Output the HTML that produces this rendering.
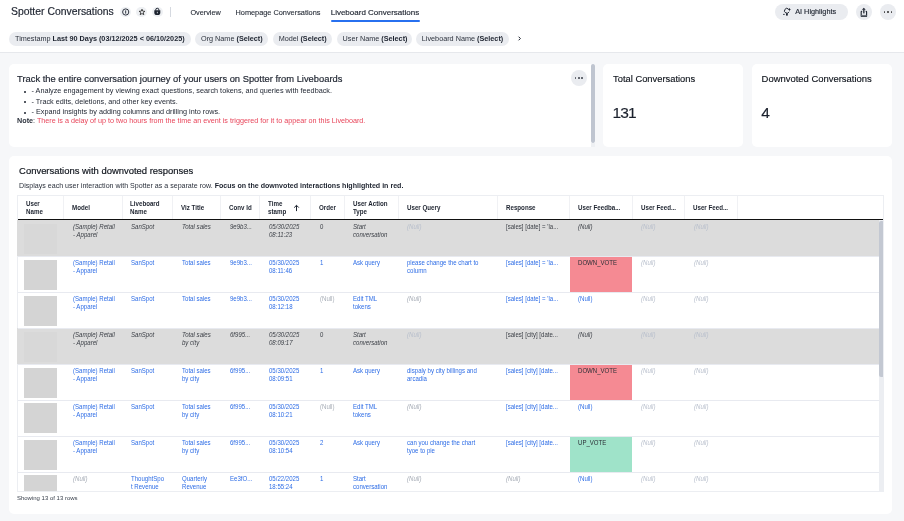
<!DOCTYPE html><html><head><meta charset="utf-8"><style>
*{margin:0;padding:0;box-sizing:border-box}
html,body{width:904px;height:521px;overflow:hidden;-webkit-font-smoothing:antialiased;background:#f6f7f9;font-family:"Liberation Sans",sans-serif;color:#1d232f}
.ab{position:absolute;white-space:nowrap}
.t{position:absolute;white-space:nowrap;line-height:1}
.chip{position:absolute;top:32px;height:14px;border-radius:7px;background:#eaecf0}
.circ{position:absolute;border-radius:50%;background:#eaecf0}
.card{position:absolute;background:#fff;border-radius:5px}
.cell{position:absolute;font-size:6.7px;line-height:8px;white-space:nowrap;transform:scaleX(0.907);transform-origin:0 0}
.hd{position:absolute;font-size:6.8px;line-height:8px;font-weight:700;color:#1d232f;white-space:nowrap;transform:scaleX(0.91);transform-origin:0 0}
.img{position:absolute;background:#d4d4d4}
</style></head><body><div id="wrap" style="position:absolute;left:0;top:0;width:904px;height:521px;will-change:transform">
<div class="ab" style="left:0;top:0;width:904px;height:53px;background:#fff;border-bottom:1px solid #e6e8ec"></div>
<div class="t" style="left:11px;top:7px;font-size:10.4px;color:#1d232f;-webkit-text-stroke:0.18px #1d232f">Spotter Conversations</div>
<div class="circ" style="left:120.15px;top:6.7px;width:10.5px;height:10.5px;background:#eef0f3"></div>
<div class="circ" style="left:136.25px;top:6.7px;width:10.5px;height:10.5px;background:#eef0f3"></div>
<div class="circ" style="left:152.05px;top:6.7px;width:10.5px;height:10.5px;background:#eef0f3"></div>
<svg class="ab" style="left:120.7px;top:7px" width="10" height="10" viewBox="0 0 10 10"><circle cx="4.7" cy="5" r="3.1" fill="none" stroke="#1d232f" stroke-width="0.9"/><rect x="4.25" y="3.4" width="0.9" height="3.2" fill="#1d232f"/></svg>
<svg class="ab" style="left:136.5px;top:7px" width="10" height="10" viewBox="0 0 10 10"><path d="M5 2.2 L5.8 4.2 L7.9 4.3 L6.3 5.6 L6.8 7.7 L5 6.5 L3.2 7.7 L3.7 5.6 L2.1 4.3 L4.2 4.2 Z" fill="none" stroke="#222" stroke-width="0.8" stroke-linejoin="round"/></svg>
<svg class="ab" style="left:150px;top:5px" width="14" height="14" viewBox="0 0 14 14"><path d="M5.7 5.6 V4.9 A1.6 1.6 0 0 1 8.9 4.9 V5.6" fill="none" stroke="#1d232f" stroke-width="1"/><path d="M4.3 5.2 H10.3 V7.4 A2.6 2.6 0 0 1 7.7 10 H6.9 A2.6 2.6 0 0 1 4.3 7.4 Z" fill="#1d232f"/><rect x="6.9" y="6.8" width="0.8" height="1.5" fill="#eceef2"/></svg>
<div class="ab" style="left:170px;top:7px;width:1px;height:10px;background:#d5d9e0"></div>
<div class="t" style="left:190.4px;top:9px;font-size:7.3px;color:#262c37;-webkit-text-stroke:0.1px #262c37">Overview</div>
<div class="t" style="left:235.5px;top:9px;font-size:7.35px;color:#262c37;-webkit-text-stroke:0.1px #262c37">Homepage Conversations</div>
<div class="t" style="left:330.7px;top:9px;font-size:8.0px;color:#1d232f;-webkit-text-stroke:0.15px #1d232f">Liveboard Conversations</div>
<div class="ab" style="left:330.7px;top:20px;width:89px;height:2px;background:#2770ef;border-radius:1px"></div>
<div class="ab" style="left:775px;top:4px;width:73px;height:16px;border-radius:8px;background:#eaecf0"></div>
<svg class="ab" style="left:780px;top:5px" width="14" height="14" viewBox="0 0 14 14"><path d="M9.07 6.81 A2.4 2.4 0 1 1 8.28 3.83" fill="none" stroke="#1d232f" stroke-width="1"/><path d="M9.4 3.0 Q9.7 4.2 10.9 4.5 Q9.7 4.8 9.4 6.0 Q9.1 4.8 7.9 4.5 Q9.1 4.2 9.4 3.0 Z" fill="#1d232f"/><circle cx="9.4" cy="4.5" r="0.75" fill="#1d232f"/><rect x="6" y="8.3" width="1.8" height="2.3" fill="#1d232f"/><path d="M3.2 9.4 H4.6" stroke="#1d232f" stroke-width="1"/></svg>
<div class="t" style="left:795.2px;top:8px;font-size:7.3px;color:#1d232f;-webkit-text-stroke:0.15px #1d232f">AI Highlights</div>
<div class="circ" style="left:856px;top:4px;width:16px;height:16px"></div>
<svg class="ab" style="left:855px;top:3px" width="18" height="18" viewBox="0 0 18 18"><path d="M6.9 6.7 L8.8 4.8 L10.7 6.7 Z" fill="#1d232f"/><rect x="8.2" y="6.4" width="1.3" height="4" fill="#1d232f"/><path d="M7.2 8.2 H6.8 A0.6 0.6 0 0 0 6.2 8.8 V12.9 A0.6 0.6 0 0 0 6.8 13.5 H11 A0.6 0.6 0 0 0 11.6 12.9 V8.8 A0.6 0.6 0 0 0 11 8.2 H10.6" fill="none" stroke="#1d232f" stroke-width="1.1"/><rect x="6.2" y="11.9" width="5.4" height="1.6" fill="#6b7079"/></svg>
<div class="circ" style="left:880px;top:4px;width:16px;height:16px"></div>
<div class="ab" style="left:883.9px;top:11.3px;width:1.4px;height:1.4px;background:#444;border-radius:50%"></div>
<div class="ab" style="left:887.3px;top:11.3px;width:1.4px;height:1.4px;background:#444;border-radius:50%"></div>
<div class="ab" style="left:890.6999999999999px;top:11.3px;width:1.4px;height:1.4px;background:#444;border-radius:50%"></div>
<div class="chip" style="left:9px;width:181.7px"></div>
<div class="t" style="left:15px;top:35px;font-size:7.25px;"><span style="color:#2b313c">Timestamp </span><b style="color:#1d232f">Last 90 Days (03/12/2025 &lt; 06/10/2025)</b></div>
<div class="chip" style="left:195px;width:73.2px"></div>
<div class="t" style="left:201px;top:35px;font-size:7.25px;"><span style="color:#2b313c">Org Name </span><b style="color:#1d232f">(Select)</b></div>
<div class="chip" style="left:272.7px;width:59.8px"></div>
<div class="t" style="left:278.7px;top:35px;font-size:7.25px;"><span style="color:#2b313c">Model </span><b style="color:#1d232f">(Select)</b></div>
<div class="chip" style="left:336.6px;width:75.3px"></div>
<div class="t" style="left:342.6px;top:35px;font-size:7.25px;"><span style="color:#2b313c">User Name </span><b style="color:#1d232f">(Select)</b></div>
<div class="chip" style="left:415.8px;width:93.0px"></div>
<div class="t" style="left:421.8px;top:35px;font-size:7.25px;"><span style="color:#2b313c">Liveboard Name </span><b style="color:#1d232f">(Select)</b></div>
<svg class="ab" style="left:515.5px;top:35px" width="7" height="7" viewBox="0 0 7 7"><path d="M2.6 1.7 L4.4 3.5 L2.6 5.3" fill="none" stroke="#1d232f" stroke-width="1"/></svg>
<div class="card" style="left:9px;top:64px;width:586px;height:83px;border-radius:5px 0 0 5px"></div>
<div class="ab" style="left:591.2px;top:64px;width:3.6px;height:78.7px;background:#bfc5d0;border-radius:2px"></div>
<div class="ab" style="left:591.2px;top:142.5px;width:3.6px;height:4.5px;background:#eef0f3"></div>
<div class="t" style="left:17.1px;top:75px;font-size:9.35px;color:#1d232f;-webkit-text-stroke:0.18px #1d232f">Track the entire conversation journey of your users on Spotter from Liveboards</div>
<div class="ab" style="left:24px;top:90.5px;width:2px;height:2px;border-radius:50%;background:#1d232f"></div>
<div class="t" style="left:31.5px;top:87px;font-size:7.27px;color:#1d232f">- Analyze engagement by viewing exact questions, search tokens, and queries with feedback.</div>
<div class="ab" style="left:24px;top:101px;width:2px;height:2px;border-radius:50%;background:#1d232f"></div>
<div class="t" style="left:31.5px;top:98px;font-size:7.27px;color:#1d232f">- Track edits, deletions, and other key events.</div>
<div class="ab" style="left:24px;top:111.6px;width:2px;height:2px;border-radius:50%;background:#1d232f"></div>
<div class="t" style="left:31.5px;top:108px;font-size:7.27px;color:#1d232f">- Expand insights by adding columns and drilling into rows.</div>
<div class="t" style="left:17.1px;top:117px;font-size:7.2px;"><b style="color:#2b313c">Note</b><span style="color:#2b313c">:</span><span style="color:#e8455a"> There is a delay of up to two hours from the time an event is triggered for it to appear on this Liveboard.</span></div>
<div class="circ" style="left:570.8px;top:69.7px;width:16px;height:16px"></div>
<div class="ab" style="left:574.65px;top:77px;width:1.5px;height:1.5px;background:#62676f;border-radius:0.3px"></div>
<div class="ab" style="left:578.05px;top:77px;width:1.5px;height:1.5px;background:#62676f;border-radius:0.3px"></div>
<div class="ab" style="left:581.45px;top:77px;width:1.5px;height:1.5px;background:#62676f;border-radius:0.3px"></div>
<div class="card" style="left:603px;top:64px;width:140.3px;height:83px"></div>
<div class="t" style="left:613.1px;top:75px;font-size:9.36px;color:#10151d;-webkit-text-stroke:0.15px #10151d">Total Conversations</div>
<div class="t" style="left:612.6px;top:105px;font-size:15.5px;color:#1a202c;letter-spacing:-0.9px;-webkit-text-stroke:0.15px #1a202c">131</div>
<div class="card" style="left:751.7px;top:64px;width:140px;height:83px"></div>
<div class="t" style="left:761.6px;top:74px;font-size:9.45px;color:#10151d;-webkit-text-stroke:0.15px #10151d">Downvoted Conversations</div>
<div class="t" style="left:761.2px;top:105px;font-size:15.5px;color:#1a202c;-webkit-text-stroke:0.15px #1a202c">4</div>
<div class="card" style="left:9px;top:155.7px;width:883px;height:358.3px"></div>
<div class="t" style="left:19.1px;top:166px;font-size:9.45px;color:#10151d;-webkit-text-stroke:0.18px #10151d">Conversations with downvoted responses</div>
<div class="t" style="left:19.1px;top:183px;font-size:7.08px;"><span style="color:#2b313c">Displays each user interaction with Spotter as a separate row. </span><b style="color:#1d232f">Focus on the downvoted interactions highlighted in red.</b></div>
<div class="ab" style="left:17px;top:195px;width:867.0px;height:297.0px;border:1px solid #eceef2;overflow:hidden">
<div class="ab" style="left:45.0px;top:0;width:0.7px;height:23.0px;background:#f0f1f4"></div>
<div class="hd" style="left:7.8px;top:4.0px">User<br>Name</div>
<div class="ab" style="left:103.5px;top:0;width:0.7px;height:23.0px;background:#f0f1f4"></div>
<div class="hd" style="left:53.9px;top:8.0px">Model</div>
<div class="ab" style="left:154.0px;top:0;width:0.7px;height:23.0px;background:#f0f1f4"></div>
<div class="hd" style="left:112.4px;top:4.0px">Liveboard<br>Name</div>
<div class="ab" style="left:202.3px;top:0;width:0.7px;height:23.0px;background:#f0f1f4"></div>
<div class="hd" style="left:162.9px;top:8.0px">Viz Title</div>
<div class="ab" style="left:241.3px;top:0;width:0.7px;height:23.0px;background:#f0f1f4"></div>
<div class="hd" style="left:211.2px;top:8.0px">Conv Id</div>
<div class="ab" style="left:292.3px;top:0;width:0.7px;height:23.0px;background:#f0f1f4"></div>
<div class="hd" style="left:250.2px;top:4.0px">Time<br>stamp</div>
<div class="ab" style="left:325.9px;top:0;width:0.7px;height:23.0px;background:#f0f1f4"></div>
<div class="hd" style="left:301.2px;top:8.0px">Order</div>
<div class="ab" style="left:380.2px;top:0;width:0.7px;height:23.0px;background:#f0f1f4"></div>
<div class="hd" style="left:334.8px;top:4.0px">User Action<br>Type</div>
<div class="ab" style="left:479.2px;top:0;width:0.7px;height:23.0px;background:#f0f1f4"></div>
<div class="hd" style="left:389.1px;top:8.0px">User Query</div>
<div class="ab" style="left:550.9px;top:0;width:0.7px;height:23.0px;background:#f0f1f4"></div>
<div class="hd" style="left:488.1px;top:8.0px">Response</div>
<div class="ab" style="left:613.9px;top:0;width:0.7px;height:23.0px;background:#f0f1f4"></div>
<div class="hd" style="left:559.8px;top:8.0px">User Feedba...</div>
<div class="ab" style="left:665.8px;top:0;width:0.7px;height:23.0px;background:#f0f1f4"></div>
<div class="hd" style="left:622.8px;top:8.0px">User Feed...</div>
<div class="ab" style="left:719.0px;top:0;width:0.7px;height:23.0px;background:#f0f1f4"></div>
<div class="hd" style="left:674.7px;top:8.0px">User Feed...</div>
<svg class="ab" style="left:275.0px;top:8.0px" width="7" height="8" viewBox="0 0 7 8"><path d="M3.5 7.1 V1.5 M1.2 3.6 L3.5 1.3 L5.8 3.6" fill="none" stroke="#1d232f" stroke-width="1"/></svg>
<div class="ab" style="left:0;top:23.00px;width:867.0px;height:1px;background:#111"></div>
<div class="ab" style="left:0;top:24.00px;width:867.0px;height:36.0px;background:#dcdcdc;"></div>
<div class="img" style="left:6.0px;top:28.00px;width:33.2px;height:30px;background:#d8d8d8"></div>
<div class="cell" style="left:54.5px;top:27.00px;color:#3b3f46;font-style:italic">(Sample) Retail<br>- Apparel</div>
<div class="cell" style="left:113.0px;top:27.00px;color:#3b3f46;font-style:italic">SanSpot</div>
<div class="cell" style="left:163.5px;top:27.00px;color:#3b3f46;font-style:italic">Total sales</div>
<div class="cell" style="left:211.8px;top:27.00px;color:#3b3f46;font-style:italic">9e9b3...</div>
<div class="cell" style="left:250.8px;top:27.00px;color:#3b3f46;font-style:italic">05/30/2025<br>08:11:23</div>
<div class="cell" style="left:301.8px;top:27.00px;color:#3b3f46">0</div>
<div class="cell" style="left:335.4px;top:27.00px;color:#3b3f46;font-style:italic">Start<br>conversation</div>
<div class="cell" style="left:388.7px;top:27.00px;color:#b8bfcc;font-style:italic">(Null)</div>
<div class="cell" style="left:488.0px;top:27.00px;color:#3b3f46">[sales] [date] = 'la...</div>
<div class="cell" style="left:560.4px;top:27.00px;color:#3b3f46;font-style:italic">(Null)</div>
<div class="cell" style="left:623.4px;top:27.00px;color:#b8bfcc;font-style:italic">(Null)</div>
<div class="cell" style="left:676.1px;top:27.00px;color:#b8bfcc;font-style:italic">(Null)</div>
<div class="ab" style="left:0;top:60.00px;width:867.0px;height:36.0px;background:#fff;border-top:1px solid #e8eaf0"></div>
<div class="img" style="left:6.0px;top:64.00px;width:33.2px;height:30px;background:#d4d4d4"></div>
<div class="cell" style="left:54.5px;top:63.00px;color:#2e6de6">(Sample) Retail<br>- Apparel</div>
<div class="cell" style="left:113.0px;top:63.00px;color:#2e6de6">SanSpot</div>
<div class="cell" style="left:163.5px;top:63.00px;color:#2e6de6">Total sales</div>
<div class="cell" style="left:211.8px;top:63.00px;color:#2e6de6">9e9b3...</div>
<div class="cell" style="left:250.8px;top:63.00px;color:#2e6de6">05/30/2025<br>08:11:46</div>
<div class="cell" style="left:301.8px;top:63.00px;color:#2e6de6">1</div>
<div class="cell" style="left:335.4px;top:63.00px;color:#2e6de6">Ask query</div>
<div class="cell" style="left:388.7px;top:63.00px;color:#2e6de6">please change the chart to<br>column</div>
<div class="cell" style="left:488.0px;top:63.00px;color:#2e6de6">[sales] [date] = 'la...</div>
<div class="ab" style="left:552.2px;top:61.00px;width:62.2px;height:35px;background:#f58a93"></div>
<div class="cell" style="left:560.4px;top:63.00px;color:#2b2f36">DOWN_VOTE</div>
<div class="cell" style="left:623.4px;top:63.00px;color:#b8bfcc;font-style:italic">(Null)</div>
<div class="cell" style="left:676.1px;top:63.00px;color:#b8bfcc;font-style:italic">(Null)</div>
<div class="ab" style="left:0;top:96.00px;width:867.0px;height:36.0px;background:#fff;border-top:1px solid #e8eaf0"></div>
<div class="img" style="left:6.0px;top:100.00px;width:33.2px;height:30px;background:#d4d4d4"></div>
<div class="cell" style="left:54.5px;top:99.00px;color:#2e6de6">(Sample) Retail<br>- Apparel</div>
<div class="cell" style="left:113.0px;top:99.00px;color:#2e6de6">SanSpot</div>
<div class="cell" style="left:163.5px;top:99.00px;color:#2e6de6">Total sales</div>
<div class="cell" style="left:211.8px;top:99.00px;color:#2e6de6">9e9b3...</div>
<div class="cell" style="left:250.8px;top:99.00px;color:#2e6de6">05/30/2025<br>08:12:18</div>
<div class="cell" style="left:301.8px;top:99.00px;color:#a6acb6">(Null)</div>
<div class="cell" style="left:335.4px;top:99.00px;color:#2e6de6">Edit TML<br>tokens</div>
<div class="cell" style="left:388.7px;top:99.00px;color:#a6acb6;font-style:italic">(Null)</div>
<div class="cell" style="left:488.0px;top:99.00px;color:#2e6de6">[sales] [date] = 'la...</div>
<div class="cell" style="left:560.4px;top:99.00px;color:#2e6de6">(Null)</div>
<div class="cell" style="left:623.4px;top:99.00px;color:#b8bfcc;font-style:italic">(Null)</div>
<div class="cell" style="left:676.1px;top:99.00px;color:#b8bfcc;font-style:italic">(Null)</div>
<div class="ab" style="left:0;top:132.00px;width:867.0px;height:36.0px;background:#dcdcdc;border-top:1px solid #e8eaf0"></div>
<div class="img" style="left:6.0px;top:136.00px;width:33.2px;height:30px;background:#d8d8d8"></div>
<div class="cell" style="left:54.5px;top:135.00px;color:#3b3f46;font-style:italic">(Sample) Retail<br>- Apparel</div>
<div class="cell" style="left:113.0px;top:135.00px;color:#3b3f46;font-style:italic">SanSpot</div>
<div class="cell" style="left:163.5px;top:135.00px;color:#3b3f46;font-style:italic">Total sales<br>by city</div>
<div class="cell" style="left:211.8px;top:135.00px;color:#3b3f46;font-style:italic">6f995...</div>
<div class="cell" style="left:250.8px;top:135.00px;color:#3b3f46;font-style:italic">05/30/2025<br>08:09:17</div>
<div class="cell" style="left:301.8px;top:135.00px;color:#3b3f46">0</div>
<div class="cell" style="left:335.4px;top:135.00px;color:#3b3f46;font-style:italic">Start<br>conversation</div>
<div class="cell" style="left:388.7px;top:135.00px;color:#b8bfcc;font-style:italic">(Null)</div>
<div class="cell" style="left:488.0px;top:135.00px;color:#3b3f46">[sales] [city] [date...</div>
<div class="cell" style="left:560.4px;top:135.00px;color:#3b3f46;font-style:italic">(Null)</div>
<div class="cell" style="left:623.4px;top:135.00px;color:#b8bfcc;font-style:italic">(Null)</div>
<div class="cell" style="left:676.1px;top:135.00px;color:#b8bfcc;font-style:italic">(Null)</div>
<div class="ab" style="left:0;top:168.00px;width:867.0px;height:36.0px;background:#fff;border-top:1px solid #e8eaf0"></div>
<div class="img" style="left:6.0px;top:172.00px;width:33.2px;height:30px;background:#d4d4d4"></div>
<div class="cell" style="left:54.5px;top:171.00px;color:#2e6de6">(Sample) Retail<br>- Apparel</div>
<div class="cell" style="left:113.0px;top:171.00px;color:#2e6de6">SanSpot</div>
<div class="cell" style="left:163.5px;top:171.00px;color:#2e6de6">Total sales<br>by city</div>
<div class="cell" style="left:211.8px;top:171.00px;color:#2e6de6">6f995...</div>
<div class="cell" style="left:250.8px;top:171.00px;color:#2e6de6">05/30/2025<br>08:09:51</div>
<div class="cell" style="left:301.8px;top:171.00px;color:#2e6de6">1</div>
<div class="cell" style="left:335.4px;top:171.00px;color:#2e6de6">Ask query</div>
<div class="cell" style="left:388.7px;top:171.00px;color:#2e6de6">dispaly by city billings and<br>arcadia</div>
<div class="cell" style="left:488.0px;top:171.00px;color:#2e6de6">[sales] [city] [date...</div>
<div class="ab" style="left:552.2px;top:169.00px;width:62.2px;height:35px;background:#f58a93"></div>
<div class="cell" style="left:560.4px;top:171.00px;color:#2b2f36">DOWN_VOTE</div>
<div class="cell" style="left:623.4px;top:171.00px;color:#b8bfcc;font-style:italic">(Null)</div>
<div class="cell" style="left:676.1px;top:171.00px;color:#b8bfcc;font-style:italic">(Null)</div>
<div class="ab" style="left:0;top:204.00px;width:867.0px;height:36.0px;background:#fff;border-top:1px solid #e8eaf0"></div>
<div class="img" style="left:6.0px;top:207.00px;width:33.2px;height:30px;background:#d4d4d4"></div>
<div class="cell" style="left:54.5px;top:207.00px;color:#2e6de6">(Sample) Retail<br>- Apparel</div>
<div class="cell" style="left:113.0px;top:207.00px;color:#2e6de6">SanSpot</div>
<div class="cell" style="left:163.5px;top:207.00px;color:#2e6de6">Total sales<br>by city</div>
<div class="cell" style="left:211.8px;top:207.00px;color:#2e6de6">6f995...</div>
<div class="cell" style="left:250.8px;top:207.00px;color:#2e6de6">05/30/2025<br>08:10:21</div>
<div class="cell" style="left:301.8px;top:207.00px;color:#a6acb6">(Null)</div>
<div class="cell" style="left:335.4px;top:207.00px;color:#2e6de6">Edit TML<br>tokens</div>
<div class="cell" style="left:388.7px;top:207.00px;color:#a6acb6;font-style:italic">(Null)</div>
<div class="cell" style="left:488.0px;top:207.00px;color:#2e6de6">[sales] [city] [date...</div>
<div class="cell" style="left:560.4px;top:207.00px;color:#2e6de6">(Null)</div>
<div class="cell" style="left:623.4px;top:207.00px;color:#b8bfcc;font-style:italic">(Null)</div>
<div class="cell" style="left:676.1px;top:207.00px;color:#b8bfcc;font-style:italic">(Null)</div>
<div class="ab" style="left:0;top:240.00px;width:867.0px;height:36.0px;background:#fff;border-top:1px solid #e8eaf0"></div>
<div class="img" style="left:6.0px;top:244.00px;width:33.2px;height:30px;background:#d4d4d4"></div>
<div class="cell" style="left:54.5px;top:243.00px;color:#2e6de6">(Sample) Retail<br>- Apparel</div>
<div class="cell" style="left:113.0px;top:243.00px;color:#2e6de6">SanSpot</div>
<div class="cell" style="left:163.5px;top:243.00px;color:#2e6de6">Total sales<br>by city</div>
<div class="cell" style="left:211.8px;top:243.00px;color:#2e6de6">6f995...</div>
<div class="cell" style="left:250.8px;top:243.00px;color:#2e6de6">05/30/2025<br>08:10:54</div>
<div class="cell" style="left:301.8px;top:243.00px;color:#2e6de6">2</div>
<div class="cell" style="left:335.4px;top:243.00px;color:#2e6de6">Ask query</div>
<div class="cell" style="left:388.7px;top:243.00px;color:#2e6de6">can you change the chart<br>tyoe to pie</div>
<div class="cell" style="left:488.0px;top:243.00px;color:#2e6de6">[sales] [city] [date...</div>
<div class="ab" style="left:552.2px;top:241.00px;width:62.2px;height:35px;background:#9fe3c9"></div>
<div class="cell" style="left:560.4px;top:243.00px;color:#2b2f36">UP_VOTE</div>
<div class="cell" style="left:623.4px;top:243.00px;color:#b8bfcc;font-style:italic">(Null)</div>
<div class="cell" style="left:676.1px;top:243.00px;color:#b8bfcc;font-style:italic">(Null)</div>
<div class="ab" style="left:0;top:276.00px;width:867.0px;height:36.0px;background:#fff;border-top:1px solid #e8eaf0"></div>
<div class="img" style="left:6.0px;top:279.00px;width:33.2px;height:30px;background:#d4d4d4"></div>
<div class="cell" style="left:54.5px;top:279.00px;color:#a6acb6;font-style:italic">(Null)</div>
<div class="cell" style="left:113.0px;top:279.00px;color:#2e6de6">ThoughtSpo<br>t Revenue</div>
<div class="cell" style="left:163.5px;top:279.00px;color:#2e6de6">Quarterly<br>Revenue</div>
<div class="cell" style="left:211.8px;top:279.00px;color:#2e6de6">Ee3fO...</div>
<div class="cell" style="left:250.8px;top:279.00px;color:#2e6de6">05/22/2025<br>18:55:24</div>
<div class="cell" style="left:301.8px;top:279.00px;color:#2e6de6">1</div>
<div class="cell" style="left:335.4px;top:279.00px;color:#2e6de6">Start<br>conversation</div>
<div class="cell" style="left:388.7px;top:279.00px;color:#a6acb6;font-style:italic">(Null)</div>
<div class="cell" style="left:488.0px;top:279.00px;color:#a6acb6;font-style:italic">(Null)</div>
<div class="cell" style="left:560.4px;top:279.00px;color:#2e6de6">(Null)</div>
<div class="cell" style="left:623.4px;top:279.00px;color:#b8bfcc;font-style:italic">(Null)</div>
<div class="cell" style="left:676.1px;top:279.00px;color:#b8bfcc;font-style:italic">(Null)</div>
<div class="ab" style="left:861.4px;top:24.4px;width:4.2px;height:271.6px;background:#eceef2"></div>
<div class="ab" style="left:861.4px;top:25.0px;width:4.2px;height:155.6px;background:#c3c8d2;border-radius:2px"></div>
</div>
<div class="ab" style="left:17px;top:220.0px;width:1px;height:36px;background:#dcdcdc"></div>
<div class="ab" style="left:17px;top:328.0px;width:1px;height:36px;background:#dcdcdc"></div>
<div class="t" style="left:16.9px;top:495px;font-size:6.0px;color:#3a414d">Showing 13 of 13 rows</div>
</div></body></html>
